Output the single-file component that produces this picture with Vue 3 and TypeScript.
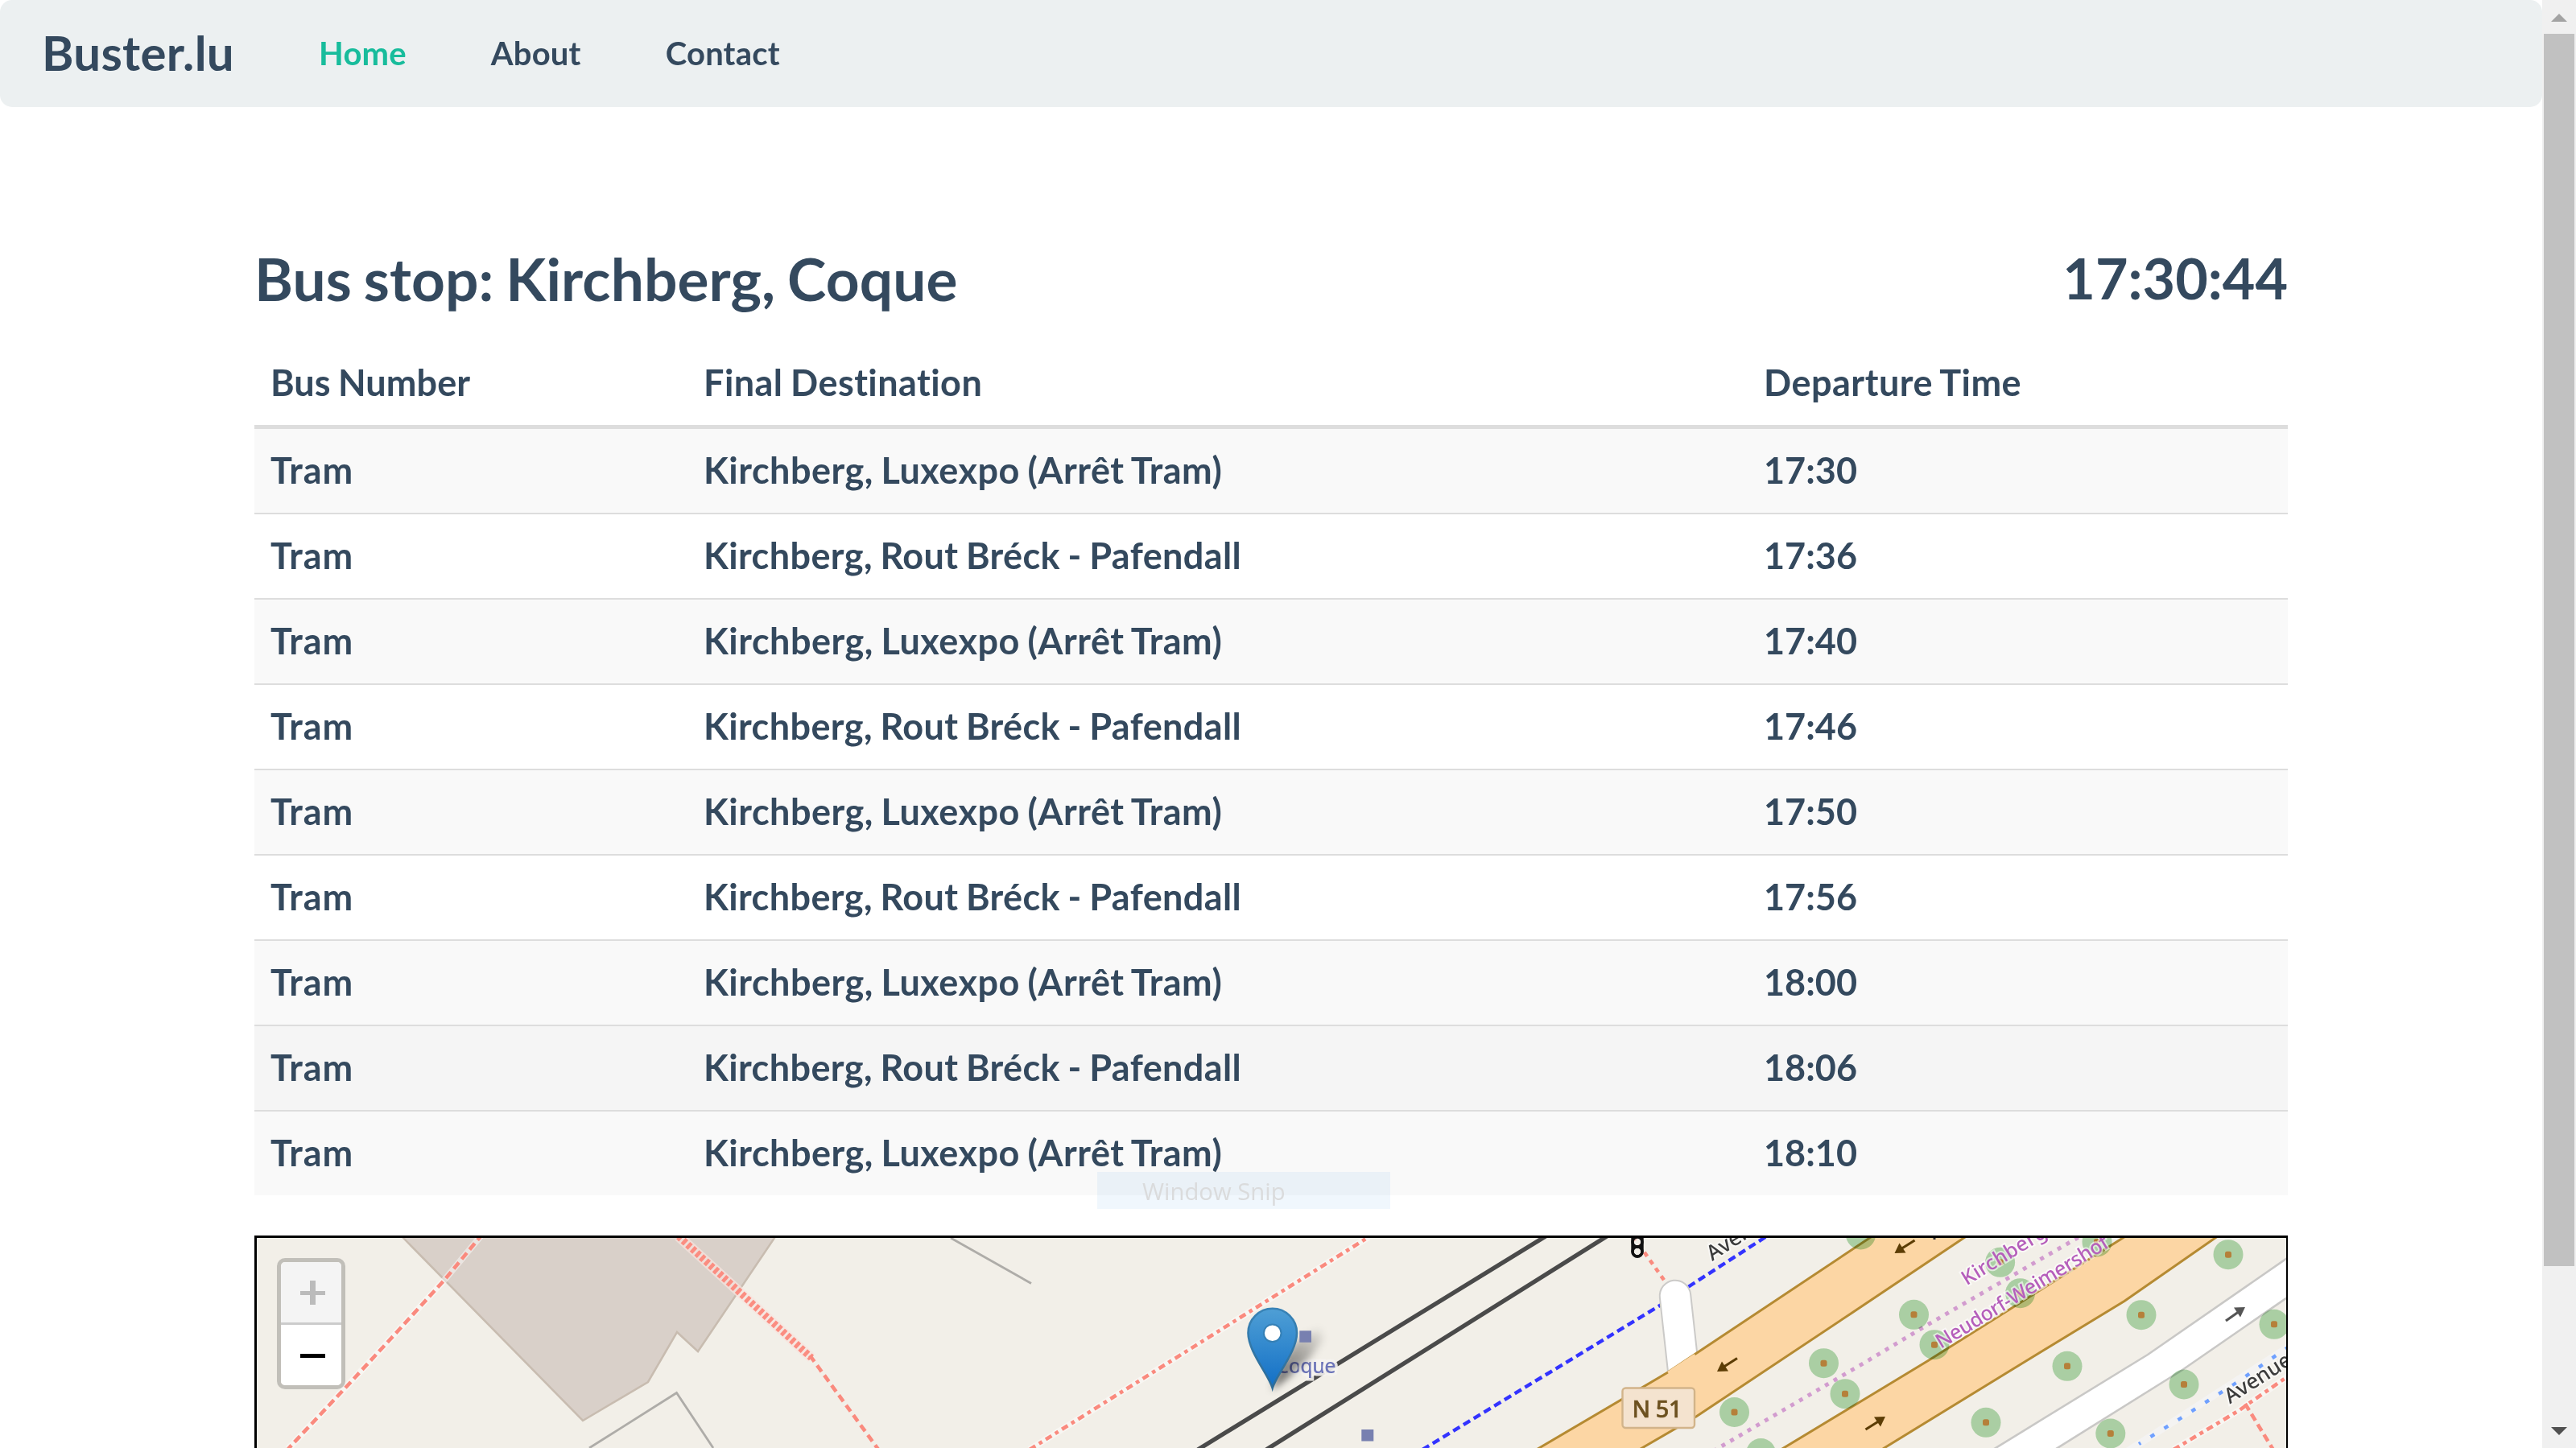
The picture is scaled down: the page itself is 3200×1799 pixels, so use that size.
<script setup lang="ts">
interface Departure {
  line: string
  destination: string
  time: string
}

const links = [
  { label: 'Home', active: true },
  { label: 'About', active: false },
  { label: 'Contact', active: false },
]

const luxexpo = 'Kirchberg, Luxexpo (Arrêt Tram)'
const pafendall = 'Kirchberg, Rout Bréck - Pafendall'
const times = ['17:30', '17:36', '17:40', '17:46', '17:50', '17:56', '18:00', '18:06', '18:10']
const departures: Departure[] = times.map((time, i) => ({
  line: 'Tram',
  destination: i % 2 ? pafendall : luxexpo,
  time,
}))
const hovered = 7

const trees: [number, number][] = [
  [2265.5, 1693.7], [2292, 1731.7], [2154.5, 1754.5], [2187.5, 1805.5], [2311.5, 1534],
  [2377.5, 1633.3], [2403, 1670.7], [2484.6, 1568.3], [2509.6, 1606.7], [2605, 1543],
  [2768, 1558.7], [2660, 1633.7], [2568, 1697.3], [2467, 1767.3], [2825, 1645.3],
  [2713, 1720], [2621.8, 1781],
]
</script>

<template>
  <div class="window">
    <div class="page">
      <nav class="navbar">
        <a class="brand">Buster.lu</a>
        <a v-for="l in links" :key="l.label" class="link" :class="{ active: l.active }">{{ l.label }}</a>
      </nav>

      <main class="container">
        <header class="heading">
          <h1 class="title">Bus stop: Kirchberg, Coque</h1>
          <span class="clock">17:30:44</span>
        </header>

        <table class="table">
          <thead>
            <tr>
              <th class="c1">Bus Number</th>
              <th class="c2">Final Destination</th>
              <th class="c3">Departure Time</th>
            </tr>
          </thead>
          <tbody>
            <tr v-for="(d, i) in departures" :key="d.time" :class="{ hover: i === hovered }">
              <td class="tram">{{ d.line }}</td>
              <td :class="i % 2 ? 'paf' : 'lux'">{{ d.destination }}</td>
              <td>{{ d.time }}</td>
            </tr>
          </tbody>
        </table>

        <section class="map">
          <svg class="tiles" viewBox="319 1538 2521 261" width="2521" height="261">
            <defs>
              <linearGradient id="pin" x1="0" y1="0" x2="0" y2="1">
                <stop offset="0" stop-color="#4f9fd5" />
                <stop offset="1" stop-color="#126fc6" />
              </linearGradient>
              <linearGradient id="pinEdge" x1="0" y1="0" x2="0" y2="1">
                <stop offset="0" stop-color="#3883b7" />
                <stop offset="1" stop-color="#2e6c97" />
              </linearGradient>
              <linearGradient id="fade" gradientUnits="userSpaceOnUse" x1="1581" y1="1724" x2="1640" y2="1648">
                <stop offset="0" stop-opacity=".6" />
                <stop offset=".55" stop-opacity=".32" />
                <stop offset="1" stop-opacity=".03" />
              </linearGradient>
              <filter id="soft" x="-40%" y="-40%" width="180%" height="180%">
                <feGaussianBlur stdDeviation="5" />
              </filter>
            </defs>
            <rect x="319" y="1538" width="2521" height="261" fill="#f2efe8" />

            <!-- buildings and barriers -->
            <path d="M490 1526 L501 1538 L724 1765 L805 1717 L841 1655 L867 1679 L962 1538 L970 1526 Z" fill="#d9d0c9" stroke="#c8bcb0" stroke-width="2.5" />
            <path d="M732 1799 L840.5 1730.5 L886 1799 M1181 1538 L1281 1594.5" fill="none" stroke="#aeaca8" stroke-width="2.8" />

            <!-- footways -->
            <g fill="none">
              <path class="halo" d="M597 1536 L551.7 1590.7 L493 1655 L433 1720 L358 1800" />
              <path class="foot" d="M597 1536 L551.7 1590.7 L493 1655 L433 1720 L358 1800" stroke-dasharray="10 5.4" stroke-dashoffset="4" />
              <path d="M843 1536 L1008 1687" stroke="#f8e4de" stroke-opacity=".7" stroke-width="13" />
              <path d="M843 1536 L1008 1687" stroke="#fb8d81" stroke-width="9" stroke-dasharray="4.6 3" />
              <path class="foot" d="M1006 1684 L1092 1802" stroke-dasharray="9.5 5.8" />
              <path class="halo" d="M1279 1801 L1700 1537" />
              <path class="foot" d="M1279 1801 L1700 1537" stroke-dasharray="8.5 5.3 4.6 5.3" />
              <path class="foot" d="M2030 1538 L2069 1593" stroke-dasharray="6 6" stroke-dashoffset="2" />
              <path class="halo" d="M2700 1801 L2782 1752 L2793 1744 L2842 1710" />
              <path class="foot" d="M2700 1801 L2782 1752 L2793 1744 L2842 1710" stroke-dasharray="8.5 5.3 5 5.3" />
              <path class="foot" d="M2789 1744 L2825 1803" stroke-dasharray="9.5 5.5" />
              <path d="M2640 1805 L2842 1674" stroke="#f4f3f2" stroke-width="9" />
              <path d="M2657 1794 L2709 1762 L2775 1720 L2842 1674" stroke="#6fa0ff" stroke-width="4.4" stroke-dasharray="5.6 14.4" stroke-dashoffset="3" />
            </g>

            <!-- tram tracks -->
            <path d="M1488 1801 L1920 1536 M1573 1801 L1996 1536" stroke="#4a4a4a" stroke-width="5.4" fill="none" />

            <!-- cycleway -->
            <path d="M1767 1801 L2062.5 1621.7 L2098.5 1598 L2196 1535" fill="none" stroke="#3333ff" stroke-width="4.4" stroke-dasharray="9.6 5.3" />

            <!-- roads -->
            <path d="M2081 1610 L2092 1710" stroke="#cbcac8" stroke-width="40.5" stroke-linecap="round" />
            <path d="M2081 1610 L2092 1710" stroke="#fff" stroke-width="36.5" stroke-linecap="round" />
            <g fill="#fcd6a4" stroke="#b58a32" stroke-width="3">
              <path d="M1900 1806 L1912 1799 L2071 1705.5 L2107 1681.5 L2330 1533 L2447 1533 L2300 1631.5 L2107 1760 L2038 1800 L2026 1807 Z" />
              <path d="M2204 1806 L2320 1736 L2396 1690 L2478.6 1638 L2645 1533 L2759 1533 L2639 1616.5 L2503.6 1699 L2339 1800 L2327 1807 Z" />
            </g>
            <path d="M2072.5 1706 L2106 1684" stroke="#fcd6a4" stroke-width="5" />
            <path d="M2466 1807 L2668 1683 L2850 1557 L2850 1606 L2711 1702 L2543 1807 Z" fill="#fff" stroke="#c9c8c6" stroke-width="2.6" />

            <!-- administrative boundary -->
            <path d="M2128 1803 L2320 1690.7 L2396 1645 L2584 1536" fill="none" stroke="#d29ccf" stroke-width="5" stroke-dasharray="5 7.4" />

            <!-- trees -->
            <g v-for="([x, y], i) in trees" :key="i">
              <circle :cx="x" :cy="y" r="18.5" class="crown" />
              <rect :x="x - 4" :y="y - 4" width="8" height="8" rx="2.5" fill="#b5803a" />
            </g>

            <!-- direction arrows -->
            <g stroke-width="3.2" stroke="#5c3d05" fill="#5c3d05">
              <path d="M2158 1687.5 L2140 1699" /><path stroke="none" d="M2133 1704 L2139 1691.5 L2147 1703.5 Z" />
              <path d="M2378.5 1541 L2361 1552" /><path stroke="none" d="M2353.5 1557 L2359.5 1544.5 L2367.5 1556.5 Z" />
              <path d="M2317.5 1776 L2335 1765" /><path stroke="none" d="M2342 1760 L2336 1772.5 L2328 1760.5 Z" />
            </g>
            <g stroke-width="3.2" stroke="#555" fill="#555">
              <path d="M2765 1641 L2782 1629" /><path stroke="none" d="M2789 1624 L2783 1636.5 L2775 1624.5 Z" />
            </g>
            <path d="M2403 1536 v4" stroke="#333" stroke-width="3" />

            <!-- signals -->
            <g fill="none" stroke="#111" stroke-width="3.4">
              <rect x="2028" y="1522" width="12" height="39" rx="6" fill="#f2efe8" fill-opacity=".6" />
              <circle cx="2034" cy="1555" r="6" />
              <circle cx="2034" cy="1543" r="6" />
              <path d="M2028 1549 h12" />
            </g>

            <!-- labels -->
            <g class="label">
              <text class="boundary" transform="translate(2443 1597.5) rotate(-31.5)" font-size="25" textLength="119">Kirchberg</text>
              <text class="boundary" transform="translate(2411 1676) rotate(-31.2)" font-size="25" textLength="246">Neudorf-Weimershof</text>
              <text class="street" transform="translate(2127 1567) rotate(-33)" font-size="26">Avenue</text>
              <text class="street" transform="translate(2770 1744.5) rotate(-32.5)" font-size="26">Avenue</text>
            </g>
            <rect x="2015.5" y="1724.5" width="89.5" height="49.5" rx="4" fill="#f4e3cf" stroke="#d2b48a" stroke-width="2.4" />
            <text class="ref" x="2027.5" y="1760.5" font-size="29" textLength="62">N 51</text>

            <!-- bus stop and marker -->
            <text class="stop" x="1585.5" y="1706" font-size="25" textLength="74">Coque</text>
            <path d="M1580 1727 L1592 1690 L1612 1664 L1640 1650 L1644 1664 L1628 1686 L1600 1712 Z" fill="url(#fade)" filter="url(#soft)" />
            <rect x="1614.3" y="1653.3" width="14.7" height="14.5" fill="#7880b0" />
            <rect x="1691.3" y="1776" width="15" height="14.5" fill="#7880b0" />
            <path d="M1580.7 1724.5 C1576 1708 1550.5 1679 1550.5 1656 A30.2 30.2 0 0 1 1611 1656 C1611 1679 1585.5 1708 1580.7 1724.5 Z" fill="url(#pin)" stroke="url(#pinEdge)" stroke-width="2.6" />
            <circle cx="1580.7" cy="1656.3" r="10.8" fill="#fff" stroke="#3580b6" stroke-width="2" />
          </svg>

          <div class="zoom">
            <svg class="zbtn off" viewBox="0 0 75 75"><path d="M24 36 h31 v5 h-31 z M36 23 h7 v30 h-7 z" fill="#bbb" /></svg>
            <svg class="zbtn" viewBox="0 0 75 75"><path d="M24 36 h31 v5 h-31 z" fill="#000" /></svg>
          </div>
        </section>
      </main>
    </div>

    <aside class="scrollbar">
      <svg class="arrow" viewBox="0 0 42 42"><path d="M11 27 L21 17 L31 27 Z" fill="#a3a3a3" /></svg>
      <div class="thumb"></div>
      <svg class="arrow end" viewBox="0 0 42 42"><path d="M11 16 L21 26 L31 16 Z" fill="#505050" /></svg>
    </aside>

    <div class="snip">Window Snip</div>
  </div>
</template>

<style>
body {
  margin: 0;
  overflow: hidden;
  background: #fff;
}
</style>

<style scoped>
.window {
  position: relative;
  display: flex;
  height: 1799px;
  overflow: hidden;
  color: #34495e;
  font-family: Lato, "Open Sans", sans-serif;
  font-weight: 700;
}
.page {
  display: flex;
  flex-direction: column;
  width: 3158px;
}
.navbar {
  display: flex;
  align-items: center;
  box-sizing: border-box;
  height: 133px;
  padding: 0 52px 3px;
  border-radius: 15px;
  background: #ecf0f1;
}
.brand {
  width: 344px;
  font-size: 60px;
  line-height: 72px;
  letter-spacing: 0.3px;
}
.link {
  margin-right: 105px;
  padding-top: 1px;
  font-size: 40px;
  line-height: 48px;
  letter-spacing: 0.2px;
}
.link.active {
  color: #18bc9c;
}
.container {
  display: flex;
  flex: 1;
  flex-direction: column;
  width: 2526px;
  margin: 0 auto;
  padding-top: 173px;
}
.heading {
  display: flex;
  justify-content: space-between;
  height: 80px;
  margin-bottom: 38px;
  line-height: 80px;
}
.title {
  margin: 0;
  font-size: 73px;
  font-weight: 700;
  letter-spacing: 0.1px;
  word-spacing: -3px;
}
.clock {
  margin-top: -1px;
  font-size: 70px;
}
.table {
  width: 100%;
  margin-bottom: 50px;
  border-collapse: separate;
  border-spacing: 0;
  table-layout: fixed;
  font-size: 45px;
  line-height: 64px;
}
.table th,
.table td {
  padding: 19px 20px 21px;
  font-variant-ligatures: none;
  font-weight: 700;
  text-align: left;
  white-space: nowrap;
  word-spacing: -1.8px;
}
.table th {
  border-bottom: 5px solid #ddd;
}
.table tr + tr td {
  border-top: 2px solid #ddd;
}
.table tbody tr:nth-child(odd) {
  background: #f9f9f9;
}
.table tbody tr.hover {
  background: #f5f5f5;
}
.table .c1 {
  width: 498px;
  letter-spacing: 0.1px;
}
.table .c2 {
  width: 1277px;
  letter-spacing: 0.45px;
}
.table .c3 {
  letter-spacing: 0.5px;
}
.tram {
  letter-spacing: 0.9px;
}
.lux {
  letter-spacing: 0.5px;
}
.paf {
  letter-spacing: 0.4px;
}
.map {
  position: relative;
  flex: 1;
  box-sizing: border-box;
  overflow: hidden;
  border: 3px solid #000;
  border-right-width: 2px;
  border-bottom: 0;
  background: #f2efe8;
}
.tiles {
  display: block;
}
.halo {
  stroke: #fff;
  stroke-opacity: 0.45;
  stroke-width: 8;
}
.foot {
  stroke: #fa8a7e;
  stroke-width: 4.6;
}
.crown {
  fill: #b3dcb3;
  mix-blend-mode: multiply;
}
.label text,
.ref,
.stop {
  font-family: "Noto Sans", "Open Sans", sans-serif;
  font-weight: 500;
  paint-order: stroke;
}
.boundary {
  fill: #b55ebb;
  stroke: rgba(255, 255, 255, 0.6);
  stroke-width: 4px;
}
.street {
  fill: #3c3c3c;
  stroke: rgba(255, 255, 255, 0.55);
  stroke-width: 4px;
}
.ref {
  fill: #6c511f;
  stroke: #6c511f;
  stroke-width: 0.6px;
}
.stop {
  fill: #6c74b8;
  stroke: rgba(245, 243, 240, 0.9);
  stroke-width: 7px;
}
.zoom {
  position: absolute;
  top: 25px;
  left: 25px;
  width: 75px;
  height: 153px;
  overflow: hidden;
  border: 5px solid rgba(0, 0, 0, 0.2);
  border-radius: 10px;
  background-clip: padding-box;
}
.zbtn {
  display: block;
  width: 75px;
  height: 75px;
  background: #fff;
}
.zbtn.off {
  border-bottom: 3px solid #ccc;
  background: #f4f4f4;
}
.scrollbar {
  display: flex;
  flex-direction: column;
  align-items: center;
  width: 42px;
  background: #f0f0f0;
}
.arrow {
  width: 42px;
  height: 42px;
}
.arrow.end {
  margin-top: auto;
}
.thumb {
  width: 38px;
  height: 1531px;
  background: #c1c1c1;
}
.snip {
  position: absolute;
  top: 1456px;
  left: 1363px;
  box-sizing: border-box;
  width: 364px;
  height: 46px;
  padding-left: 56px;
  background: rgba(0, 120, 215, 0.06);
  color: #dadbdc;
  font: 400 29.3px/48px "Open Sans", "Noto Sans", sans-serif;
}
</style>
